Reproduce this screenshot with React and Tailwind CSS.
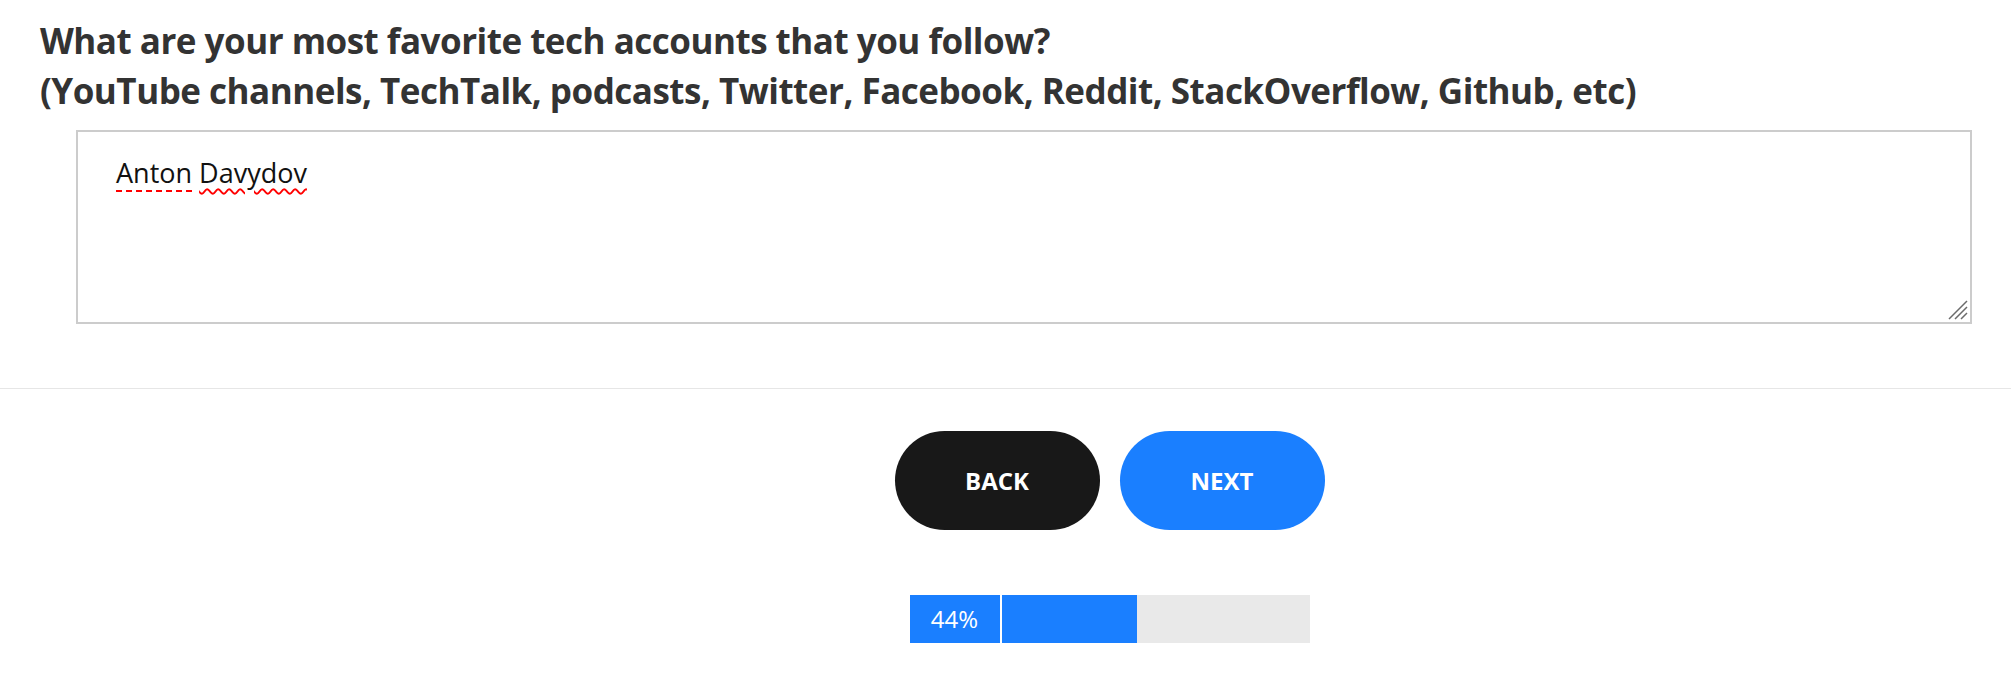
export default function App() {
  const progress = 44;

  return (
    <div className="min-h-[675px] bg-white font-['Open_Sans',sans-serif]">
      {/* QUESTION */}
      <section className="pl-[40px] pr-[39px] pt-[16px] pb-[64px] border-b border-[#e6e6e6]">
        <h2 className="text-[35px] leading-[50px] font-bold text-[#333333] tracking-[-0.5px]">
          What are your most favorite tech accounts that you follow?
          <br />
          (YouTube channels, TechTalk, podcasts, Twitter, Facebook, Reddit, StackOverflow, Github, etc)
        </h2>

        <div className="relative ml-[36px] mt-[14px] h-[194px] border-2 border-[#cccccc] pl-[38px] pt-[23px] text-[27px] leading-[36px] text-[#111111]">
          <span className="underline decoration-dashed decoration-[#ff0000] decoration-2 underline-offset-[7px]">Anton</span>{" "}
          <span className="underline decoration-wavy decoration-[#ff0000] decoration-[1.5px] underline-offset-[5px]">Davydov</span>

          {/* resize grip */}
          <svg className="absolute right-[2px] bottom-[2px]" width="20" height="20" viewBox="0 0 20 20">
            <path d="M1 19 L19 1 M7 19 L19 7 M13 19 L19 13" stroke="#6b6b6b" strokeWidth="1.5" />
          </svg>
        </div>
      </section>

      {/* NAV BUTTONS */}
      <div className="flex justify-center gap-[20px] pl-[208px] pt-[42px]">
        <button className="w-[205px] h-[99px] rounded-full bg-[#181818] text-white text-[24px] font-bold">
          BACK
        </button>
        <button className="w-[205px] h-[99px] rounded-full bg-[#1a7fff] text-white text-[24px] font-bold">
          NEXT
        </button>
      </div>

      {/* PROGRESS */}
      <div className="flex justify-center pl-[208px] pt-[65px]">
        <div className="flex w-[400px] h-[48px]">
          <div className="w-[90px] flex items-center justify-center bg-[#1a7fff] text-white text-[24px]">
            {progress}%
          </div>
          <div className="ml-[2px] flex-1 bg-[#e9e9e9]">
            <div className="h-full bg-[#1a7fff]" style={{ width: `${progress}%` }} />
          </div>
        </div>
      </div>
    </div>
  );
}
